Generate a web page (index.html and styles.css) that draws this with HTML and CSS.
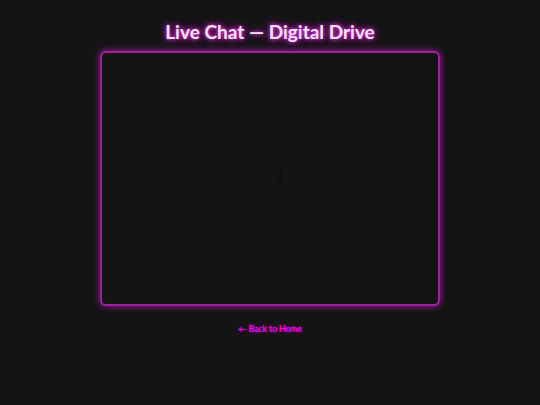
FILE: index.html
```html
<!DOCTYPE html>
<html lang="en">
<head>
<meta charset="utf-8">
<title>Live Chat — Digital Drive</title>
<link rel="stylesheet" href="styles.css">
</head>
<body>
<main class="page">
  <h1 class="title">Live Chat — Digital Drive</h1>
  <div class="chat-frame">
    <svg class="spinner" width="10" height="22" viewBox="0 0 10 22"><path d="M3 1 A14 14 0 0 1 3 21" fill="none" stroke="#0c0c0c" stroke-width="1.5"/></svg>
  </div>
  <a class="back" href="#">← Back to Home</a>
</main>
</body>
</html>
```
FILE: styles.css
```css
html, body {
  margin: 0;
  padding: 0;
  background: #141414;
}
.page {
  display: flex;
  flex-direction: column;
  align-items: center;
  padding-top: 21px;
  font-family: "Comic Sans MS", Lato, sans-serif;
}
.title {
  margin: 0;
  font-size: 19px;
  line-height: 22px;
  font-weight: bold;
  color: #ffe0ff;
  text-shadow: 0 0 4px #ff40ff, 0 0 8px #c000c0;
}
.chat-frame {
  box-sizing: border-box;
  margin-top: 8px;
  width: 340px;
  height: 255px;
  border: 2px solid #a020a0;
  border-radius: 6px;
  background: #141414;
  box-shadow: 0 0 6px 1px #8a1a8a;
  display: flex;
  align-items: center;
  justify-content: center;
}
.spinner {
  margin-left: 18px;
  margin-top: -6px;
}
.back {
  margin-top: 18px;
  font-size: 8.5px;
  font-weight: 600;
  color: #ff00ff;
  text-decoration: none;
  text-shadow: 0 0 3px #c000c0;
}
```
